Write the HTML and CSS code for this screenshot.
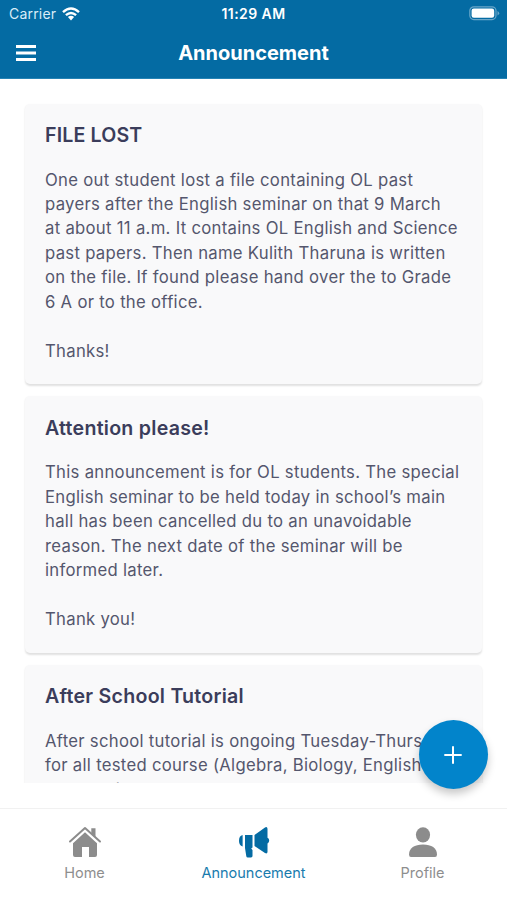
FILE: index.html
```html
<!DOCTYPE html>
<html lang="en">
<head>
<meta charset="utf-8">
<title>Announcement</title>
<link rel="stylesheet" href="styles.css">
</head>
<body>
<div class="app">
  <header class="header">
    <div class="status">
      <div class="carrier">Carrier
        <svg class="wifi" viewBox="0 0 18 14" width="18" height="14"><g fill="none" stroke="#fff" stroke-width="2.4"><path d="M1 5.2Q9-2.2 17 5.2"/><path d="M3.9 8.2Q9 3.600 14.100 8.200"/></g><path d="M5.900 10.100Q9 7.500 12.100 10.100L9 13.500Z" fill="#fff"/></svg>
      </div>
      <div class="time">11:29 AM</div>
      <svg class="battery" viewBox="0 0 31 15" width="31" height="15"><rect x=".8" y=".8" width="26.200" height="12.800" rx="4" fill="none" stroke="#69a6c9" stroke-width="1.200"/><rect x="2.600" y="2.600" width="22.600" height="9.200" rx="2.200" fill="#fff"/><path d="M28.500 5v4.400q1.700-.7 1.700-2.200T28.500 5Z" fill="#69a6c9"/></svg>
    </div>
    <div class="bar">
      <svg class="menu" viewBox="0 0 20 16" width="20" height="16"><path d="M0 1.500h20M0 8h20M0 14.500h20" stroke="#fff" stroke-width="2.800"/></svg>
      <h1>Announcement</h1>
    </div>
  </header>
  <main class="list">
    <article class="card">
      <h2 class="caps">FILE LOST</h2>
      <p>One out student lost a file containing OL past<br>payers after the English seminar on that 9 March<br>at about 11 a.m. It contains OL English and Science<br>past papers. Then name Kulith Tharuna is written<br>on the file. If found please hand over the to Grade<br>6 A or to the office.<br><br>Thanks!</p>
    </article>
    <article class="card">
      <h2>Attention please!</h2>
      <p>This announcement is for OL students. The special<br>English seminar to be held today in school’s main<br>hall has been cancelled du to an unavoidable<br>reason. The next date of the seminar will be<br>informed later.<br><br>Thank you!</p>
    </article>
    <article class="card">
      <h2>After School Tutorial</h2>
      <p>After school tutorial is ongoing Tuesday-Thursday<br>for all tested course (Algebra, Biology, English I,<br>and English II).</p>
    </article>
  </main>
  <button class="fab" aria-label="Add"><svg viewBox="0 0 18 18" width="18" height="18"><path d="M9 .3v17.400M.3 9h17.400" stroke="#fff" stroke-width="2"/></svg></button>
  <nav class="tabs">
    <a class="tab">
      <svg viewBox="0 0 34 32" width="34" height="32"><g fill="#8c8c8c"><path d="M23.300 2.200h4.200v9l-4.200-4Z"/><path d="M5 17.300 17 6.300l12 11V29q0 2-2 2h-6V21h-7v10H7q-2 0-2-2Z"/></g><path d="M2 15.500 17 2l15 13.500" fill="none" stroke="#8c8c8c" stroke-width="2" stroke-linecap="round" stroke-linejoin="round"/></svg>
      <span>Home</span>
    </a>
    <a class="tab active">
      <svg viewBox="0 0 34 32" width="34" height="32"><g fill="#046ba3"><path d="M5.600 9v11.500Q2 19.500 2 14.700T5.600 9Z"/><path d="M8 9h7.500v12.400l-1.300 1 1.300 1.500v6.200q0 1.400-1.500 1.400h-3.200q-1.300 0-1.500-1.300L8 22Z"/><path d="M17.500 9 28 1.400q2.300-1 2.500 1.300v9.100q1.700.8 1.700 2.800t-1.700 2.800v8.700q-.2 2-2.500 1L17.500 20Z"/></g></svg>
      <span>Announcement</span>
    </a>
    <a class="tab">
      <svg viewBox="0 0 34 32" width="34" height="32"><g fill="#8c8c8c"><ellipse cx="17" cy="8.800" rx="7.100" ry="7.600"/><path d="M3 28.500C3 22 8.500 18.500 17 18.500S31 22 31 28.500q0 2.500-2 2.500H5q-2 0-2-2.500Z"/></g></svg>
      <span>Profile</span>
    </a>
  </nav>
</div>
</body>
</html>
```

FILE: styles.css
```css
* { box-sizing: border-box; }
body {
  margin: 0;
  font-family: Inter, "Liberation Sans", sans-serif;
  background: #fff;
}
.app {
  position: relative;
  display: flex;
  flex-direction: column;
  width: 507px;
  height: 900px;
  overflow: hidden;
}
.header {
  height: 79px;
  flex: none;
  background: #046ba3;
  border-bottom: 1px solid #2583b5;
  color: #fff;
}
.status {
  display: grid;
  grid-template-columns: 1fr auto 1fr;
  align-items: center;
  height: 27px;
  padding: 0 7px 0 9px;
}
.carrier {
  display: flex;
  align-items: center;
  gap: 6px;
  font-size: 14px;
  letter-spacing: 0.2px;
  color: #d9edf8;
}
.time {
  margin-left: -2px;
  font-size: 14px;
  font-weight: 600;
  letter-spacing: 0.45px;
}
.battery { justify-self: end; }
.bar {
  display: grid;
  grid-template-columns: 60px 1fr 60px;
  align-items: center;
  height: 51px;
}
.menu { margin-left: 16px; }
.bar h1 {
  margin: 0;
  text-align: center;
  font-size: 20px;
  line-height: 24px;
  font-weight: 700;
}
.list {
  display: flex;
  flex-direction: column;
  gap: 12px;
  height: 704px;
  flex: none;
  padding: 25px 25px 0;
  overflow: hidden;
}
.card {
  flex: none;
  padding: 19px 20px 21px;
  border-radius: 5px;
  background: #f9f9fa;
  box-shadow: 0 1.5px 2px rgba(0, 0, 0, 0.12);
  white-space: nowrap;
}
.card + .card { padding-top: 19.6px; }
.card h2 {
  margin: 0 0 20px;
  font-size: 19.6px;
  line-height: 24.5px;
  font-weight: 600;
  letter-spacing: 0.25px;
  color: #3b3d5b;
}
.card h2.caps { letter-spacing: 0.15px; }
.card p {
  margin: 0;
  font-size: 16.7px;
  line-height: 24.5px;
  letter-spacing: 0.29px;
  color: #54566d;
}
.card:first-child p { line-height: 24.45px; }
.fab {
  position: absolute;
  left: 418.5px;
  top: 720px;
  display: flex;
  align-items: center;
  justify-content: center;
  width: 69px;
  height: 69px;
  padding: 0;
  border: 0;
  border-radius: 50%;
  background: #0284cb;
  box-shadow: 0 5px 9px rgba(0, 0, 0, 0.22);
}
.tabs {
  display: grid;
  grid-template-columns: repeat(3, 1fr);
  flex: none;
  height: 92px;
  margin-top: 25px;
  border-top: 1px solid #f1f1f1;
}
.tab {
  display: flex;
  flex-direction: column;
  align-items: center;
  gap: 6px;
  padding-top: 17px;
  color: #8e8e8e;
  font-size: 14.5px;
  line-height: 18px;
}
.active { color: #187bae; }
```
